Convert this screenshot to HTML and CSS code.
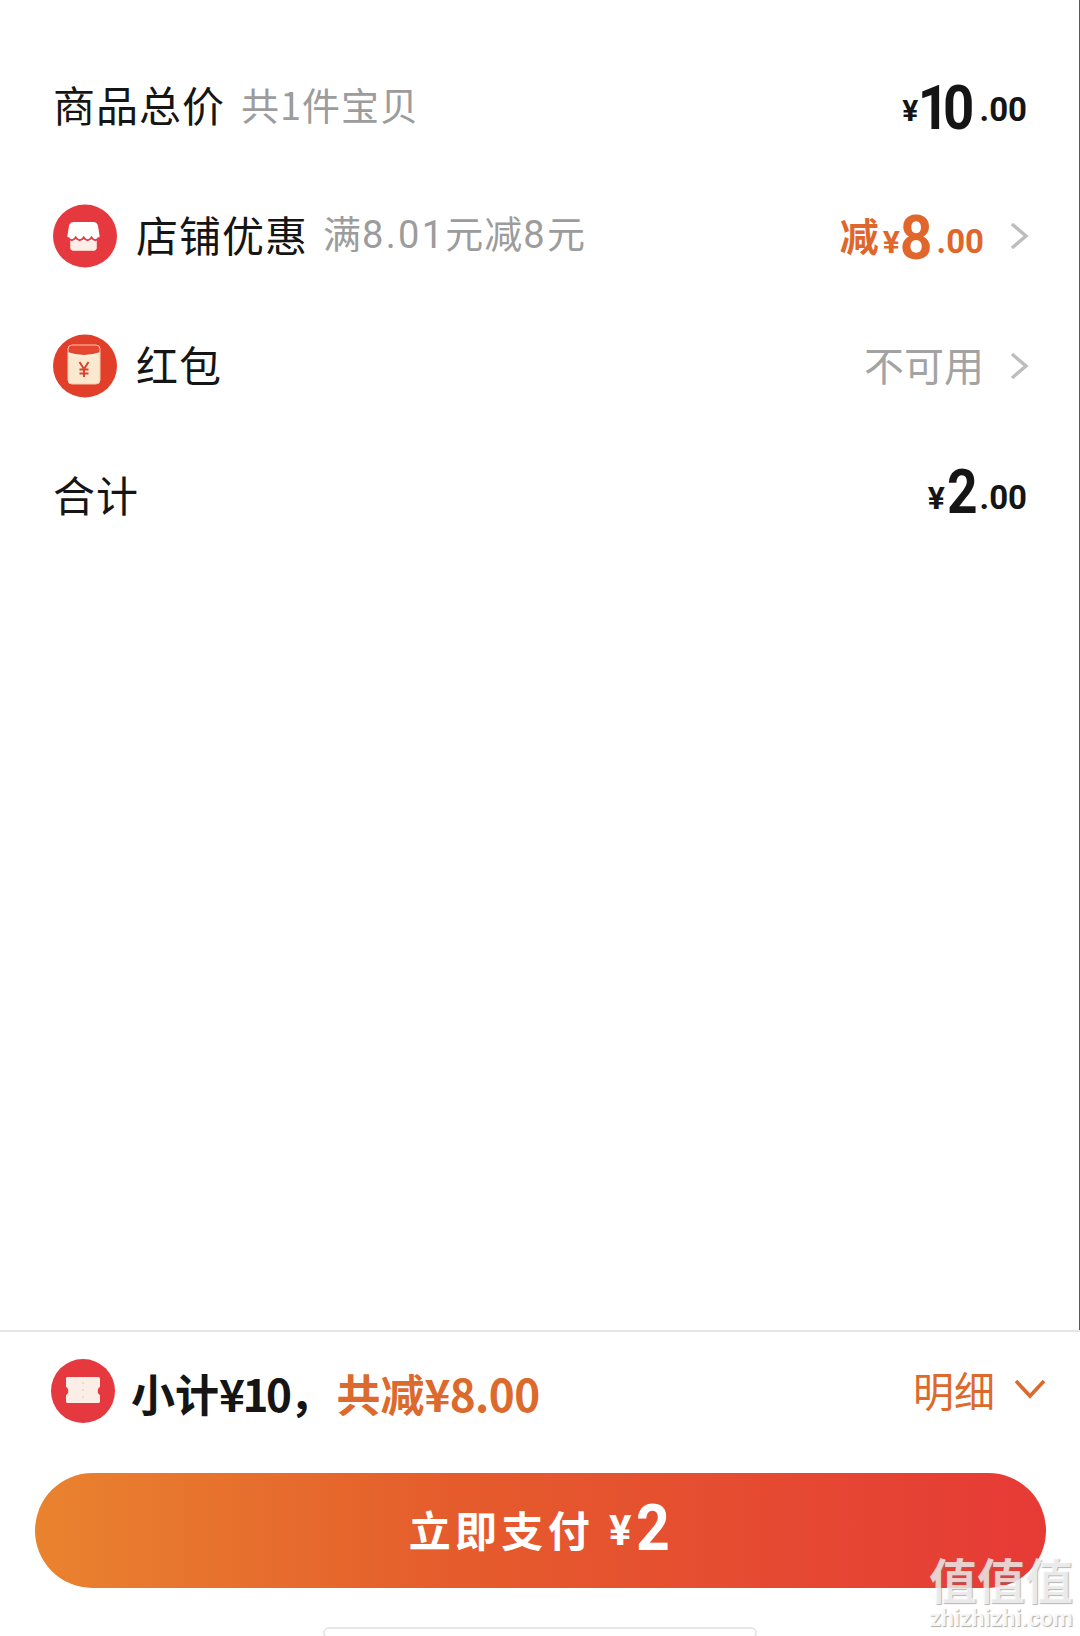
FILE: index.html
```html
<!DOCTYPE html>
<html lang="zh-CN">
<head>
<meta charset="utf-8">
<title>确认订单</title>
<link rel="stylesheet" href="styles.css">
</head>
<body>
<div class="page">
  <main class="list">
    <section class="row">
      <div class="left">
        <span class="label">商品总价</span>
        <span class="hint hint-count">共1件宝贝</span>
      </div>
      <div class="amount amount-goods"><span class="yen">¥</span><span class="big big-pair">10</span><span class="cents">.00</span></div>
    </section>
    <section class="row">
      <div class="left">
        <svg class="badge" viewBox="0 0 64 64" aria-hidden="true">
          <ellipse cx="32" cy="32" rx="32" ry="31.500" fill="#e5383f"/>
          <path d="M22 18h18c3 0 4.500 1.500 5 4l1.500 9c.3 2.500-.7 4.500-3 5.500V44c0 1.500-1 2.500-2.500 2.500H20c-1.500 0-2.500-1-2.500-2.500v-7.500c-2.300-1-3.300-3-3-5.500l1.500-9c.5-2.500 2-4 6-4z" fill="#fff"/>
          <path d="M17.500 37h26v7c0 1.500-1 2.500-2.500 2.500H20c-1.500 0-2.500-1-2.500-2.500z" fill="#fbeee6"/>
          <path d="M15 33.500c2.500 3.500 5 3.500 7.700 0 2.500 3.500 5.500 3.500 8 0 2.500 3.500 5.300 3.500 7.800 0 2.500 3.500 5 3.500 7.500 0" fill="none" stroke="#e5383f" stroke-width="2"/>
        </svg>
        <span class="label">店铺优惠</span>
        <span class="hint hint-rule">满<b>8.01</b>元减<b>8</b>元</span>
      </div>
      <div class="right">
        <div class="amount amount-shop accent"><span class="minus">减</span><span class="yen yen-gap">¥</span><span class="big big-shop">8</span><span class="cents">.00</span></div>
        <svg class="chev" viewBox="0 0 20 30" aria-hidden="true"><path d="M3 3l14 12L3 27" fill="none" stroke="#bdbdbd" stroke-width="3.400"/></svg>
      </div>
    </section>
    <section class="row">
      <div class="left">
        <svg class="badge" viewBox="0 0 64 64" aria-hidden="true">
          <ellipse cx="32" cy="32" rx="32" ry="31.500" fill="#e23f2b"/>
          <rect x="15" y="11" width="32" height="39" rx="4" fill="#fbe9cf"/>
          <path d="M15 15c0-3 1-4 4-4h24c3 0 4 1 4 4v4c-10 3.500-22 3.500-32 0z" fill="#e5462f"/>
          <rect x="15" y="11" width="32" height="39" rx="4" fill="none" stroke="#f5c9ae" stroke-width="1"/>
          <path d="M15 19c10 3.500 22 3.500 32 0" fill="none" stroke="#fff4e4" stroke-width="1.600"/>
          <path d="M26.500 28l4.500 7 4.500-7M31 35v8M26.500 35.500h9M26.500 39.500h9" fill="none" stroke="#d8432f" stroke-width="2"/>
        </svg>
        <span class="label">红包</span>
      </div>
      <div class="right">
        <span class="unavailable">不可用</span>
        <svg class="chev" viewBox="0 0 20 30" aria-hidden="true"><path d="M3 3l14 12L3 27" fill="none" stroke="#bdbdbd" stroke-width="3.400"/></svg>
      </div>
    </section>
    <section class="row">
      <div class="left"><span class="label">合计</span></div>
      <div class="amount amount-total"><span class="yen">¥</span><span class="big big-total">2</span><span class="cents">.00</span></div>
    </section>
  </main>
  <footer class="footer">
    <div class="summary">
      <div class="left">
        <svg class="badge badge-foot" viewBox="0 0 64 64" aria-hidden="true">
          <ellipse cx="32" cy="32" rx="32" ry="32" fill="#e5383f"/>
          <path d="M17 18h30c1.500 0 2 .5 2 2v8c-3 1-3 7 0 8v6c0 1.500-.5 2-2 2H17c-1.500 0-2-.5-2-2v-6c3-1 3-7 0-8v-8c0-1.500.5-2 2-2z" fill="#fbeee6"/>
          <path d="M32 23v2M32 30v2M32 37v2" stroke="#efd2c4" stroke-width="1.500"/>
        </svg>
        <span class="sum-text">小计<span class="sum-num">¥10</span>，</span>
        <span class="sum-off">共减<span class="sum-off-num">¥8.00</span></span>
      </div>
      <div class="detail">
        <span>明细</span>
        <svg class="chev-down" viewBox="0 0 32 22" aria-hidden="true"><path d="M2 3l14 15L30 3" fill="none" stroke="#dc6a2c" stroke-width="3.600"/></svg>
      </div>
    </div>
    <button class="pay"><span class="pay-label">立即支付</span><span class="pay-yen">¥</span><span class="pay-num">2</span></button>
    <div class="home"></div>
  </footer>
  <div class="watermark">
    <span class="wm-mark">值值值</span>
    <span class="wm-url">zhizhizhi.com</span>
  </div>
</div>
</body>
</html>
```
FILE: styles.css
```css
* { box-sizing: border-box; }
html, body { margin: 0; padding: 0; background: #fff; }
body {
  font-family: "Noto Sans CJK SC", "Noto Sans", sans-serif;
  color: #151515;
}
.page {
  position: relative;
  width: 1080px;
  height: 1636px;
  display: flex;
  flex-direction: column;
  overflow: hidden;
}
.list {
  flex: 1;
  padding: 41px 54px 0 53px;
  border-right: 1px solid #5a5a5a;
}
.row {
  height: 130px;
  display: flex;
  align-items: center;
  justify-content: space-between;
}
.left { display: flex; align-items: center; }
.right { display: flex; align-items: center; }
.badge { width: 64px; height: 64px; flex: none; margin-right: 19px; }
.badge-foot { margin-right: 16px; margin-left: -1px; }
.label { font-size: 42px; line-height: 60px; letter-spacing: 1px; padding-bottom: 5px; }
.hint { font-size: 38px; line-height: 60px; color: #9c9c9c; margin-left: 16px; letter-spacing: 1px; padding-bottom: 5px; }
.hint-rule { margin-left: 15px; }
.hint b { font-weight: 400; letter-spacing: 2.300px; font-family: "Roboto", sans-serif; }
.amount {
  font-family: "Roboto", sans-serif;
  font-weight: 700;
  line-height: 60px;
  white-space: nowrap;
  color: #151515;
  display: flex;
  align-items: baseline;
}
.amount-goods { padding-top: 14px; margin-right: -2px; }
.amount-shop { padding-top: 14px; }
.amount-total { padding-top: 2px; margin-right: -2px; }
.accent { color: #e0662c; }
.big { font-size: 62px; margin: 0 4px 0 5px; transform-origin: right center; }
.big-pair { letter-spacing: -7px; margin-right: 11px; margin-left: -7px; transform: scaleX(0.88); }
.big-shop { margin-left: -3px; transform: scaleX(0.92); }
.big-total { margin-left: -3px; margin-right: 2px; transform: scaleX(0.86); }
.cents { font-size: 33px; transform: translateY(-6px); }
.yen { font-size: 32px; transform: translateY(-6px); }
.amount-goods .cents, .amount-goods .yen { transform: translateY(-8px); }
.amount-total .cents, .amount-total .yen { transform: translateY(-4px); }
.amount-goods .yen { font-size: 30px; margin-left: 4px; }
.minus { font-family: "Noto Sans CJK SC", sans-serif; font-size: 39px; font-weight: 700; transform: translateY(-8px); }
.yen-gap { margin-left: 4px; }
.chev { width: 20px; height: 30px; margin-left: 25px; margin-right: -4px; }
.unavailable { font-size: 40px; color: #a3a3a3; line-height: 60px; padding-bottom: 5px; }
.footer {
  height: 306px;
  border-top: 2px solid #e6e6e6;
  display: flex;
  flex-direction: column;
  padding: 0 34px 0 35px;
}
.summary {
  height: 141px;
  flex: none;
  display: flex;
  align-items: center;
  justify-content: space-between;
  padding: 0 0 23px 17px;
}
.sum-text {
  font-size: 44px;
  font-weight: 700;
  line-height: 60px;
  white-space: nowrap;
  padding-top: 4px;
}
.sum-num { letter-spacing: -2.500px; }
.sum-off {
  font-size: 44px;
  font-weight: 700;
  color: #dc6a2c;
  line-height: 60px;
  margin-left: 3px;
  padding-top: 4px;
  white-space: nowrap;
}
.sum-off-num { letter-spacing: -0.600px; }
.detail {
  display: flex;
  align-items: center;
  font-size: 41px;
  line-height: 56px;
  color: #dc6a2c;
  margin-bottom: 4px;
}
.chev-down { width: 32px; height: 22px; margin-left: 19px; }
.pay {
  width: 1011px;
  height: 115px;
  border: 0;
  padding: 0;
  flex: none;
  border-radius: 58px;
  background: linear-gradient(90deg, #e9832f 0%, #e55d2c 40%, #e63a36 100%);
  color: #fff;
  font-family: inherit;
  display: flex;
  align-items: center;
  justify-content: center;
}
.pay-label { font-size: 42px; font-weight: 700; letter-spacing: 4.300px; margin-bottom: 5px; }
.pay-yen { font-family: "Roboto", sans-serif; font-size: 42px; font-weight: 700; margin-left: 15px; }
.pay-num { font-family: "Roboto", sans-serif; font-size: 64px; font-weight: 700; line-height: 70px; margin-left: 4px; margin-top: -3px; transform: scaleX(0.92); transform-origin: left center; }
.home {
  width: 434px;
  height: 12px;
  margin: 39px 0 0 288px;
  flex: none;
  border: 2px solid #e8e8e8;
  border-radius: 6px;
  background: #fff;
}
.watermark {
  position: absolute;
  left: 928px;
  top: 1548px;
  width: 146px;
  display: flex;
  flex-direction: column;
  align-items: center;
}
.wm-mark {
  font-size: 48px;
  line-height: 60px;
  font-weight: 700;
  color: rgba(255, 255, 255, 0.72);
  text-shadow: 1px 1px 1px rgba(120, 120, 120, 0.55);
  white-space: nowrap;
}
.wm-url {
  font-family: "Roboto", sans-serif;
  font-size: 23px;
  font-weight: 700;
  line-height: 22px;
  color: rgba(255, 255, 255, 0.9);
  text-shadow: 1px 1px 1px rgba(120, 120, 120, 0.6);
  white-space: nowrap;
}
```
